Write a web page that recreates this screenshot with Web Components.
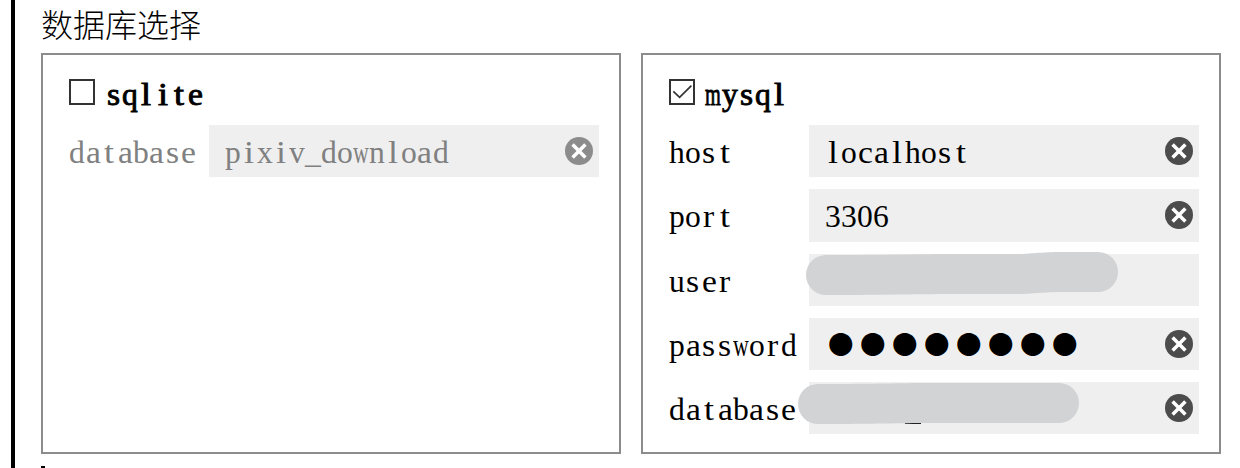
<!DOCTYPE html>
<html lang="zh-CN">
<head>
<meta charset="utf-8">
<title>数据库选择</title>
<style>
html, body { margin: 0; height: 100%; overflow: hidden; background: #fff; color: #000; }
body { font: 32px/40px "Liberation Serif", "Noto Sans CJK SC", serif; }
</style>
</head>
<body>
<db-page>
  <db-panel name="sqlite" disabled>
    <db-field label="database" value="pixiv_download" clearable></db-field>
  </db-panel>
  <db-panel name="mysql" checked>
    <db-field label="host" value="localhost" clearable></db-field>
    <db-field label="port" value="3306" clearable></db-field>
    <db-field label="user"><db-mask kind="user"></db-mask></db-field>
    <db-field label="password" secret="●●●●●●●●" clearable></db-field>
    <db-field label="database" clearable><db-mask kind="database"></db-mask></db-field>
  </db-panel>
</db-page>
<script>
// Text set on a fixed grid: each letter is centred in a half-width cell.
customElements.define('cell-text', class extends HTMLElement {
  connectedCallback() {
    if (this.shadowRoot) return;
    const cell = Number(this.getAttribute('cell')) || 16;
    this.attachShadow({ mode: 'open' }).innerHTML =
      `<style>:host{display:inline-block;white-space:nowrap;font-kerning:none;font-variant-ligatures:none}
      .fit{display:inline-block;transform-origin:0 0}</style><span class="line"></span>`;
    const line = this.shadowRoot.querySelector('.line');
    const letters = [...this.getAttribute('text')].map(ch => {
      const s = document.createElement('span');
      s.textContent = ch;
      line.append(s);
      return s;
    });
    const widths = letters.map(s => s.getBoundingClientRect().width);
    letters.forEach((s, i) => {
      const w = widths[i];
      const stretch = w > 15.8 ? 15.8 / w : w < 10 ? 1.12 : w < 15 ? 1.05 : 1;
      s.className = 'fit';
      s.style.transform = `scaleX(${stretch})`;
      const left = (cell - w * stretch) / 2;
      s.style.marginLeft = left + 'px';
      s.style.marginRight = cell - left - w + 'px';
    });
  }
});

customElements.define('clear-button', class extends HTMLElement {
  constructor() {
    super();
    this.attachShadow({ mode: 'open' }).innerHTML = `
      <style>:host{display:block;width:28px;height:28px;flex:none}svg{display:block}</style>
      <svg width="28" height="28" viewBox="0 0 28 28">
        <circle cx="14" cy="14" r="14" fill="var(--icon,#4c4c4c)"/>
        <path d="M7.6 7.6 20.4 20.4M20.4 7.6 7.6 20.4" stroke="#fff" stroke-width="3.5"/>
      </svg>`;
  }
});

customElements.define('check-box', class extends HTMLElement {
  connectedCallback() {
    if (this.shadowRoot) return;
    const tick = this.hasAttribute('checked')
      ? '<path d="M4.3 12.3 10.6 18.4 22.4 6.6" fill="none" stroke="#333" stroke-width="1.7"/>' : '';
    this.attachShadow({ mode: 'open' }).innerHTML = `
      <style>:host{display:block;width:26px;height:26px;flex:none}svg{display:block}</style>
      <svg width="26" height="26" viewBox="0 0 26 26">
        <rect x="1" y="1" width="24" height="24" fill="#fff" stroke="#333" stroke-width="2"/>${tick}
      </svg>`;
  }
});

// Marker stroke laid over a private value.
customElements.define('db-mask', class extends HTMLElement {
  connectedCallback() {
    if (this.shadowRoot) return;
    const shapes = {
      user: '<path d="M17 1C80 1 110 0 150 0H208C222 0 230-2 255-2H289A20 20 0 0 1 289 38H255C232 38 225 40 208 40H150C110 40 80 41 17 41A20 20 0 0 1 17 1Z"/>',
      database: '<path d="M96 40H112V42H96Z" fill="#222"/><path d="M9 2C70 2 90 1 120 1H250A20 20 0 0 1 250 41H120C90 41 70 42 9 42A20 20 0 0 1 9 2Z"/>'
    };
    this.attachShadow({ mode: 'open' }).innerHTML = `
      <style>:host{position:absolute;left:0;top:0}svg{display:block;overflow:visible}</style>
      <svg width="390" height="52" viewBox="0 0 390 52" fill="#d1d3d5">${shapes[this.getAttribute('kind')]}</svg>`;
  }
});

customElements.define('db-field', class extends HTMLElement {
  connectedCallback() {
    if (this.shadowRoot) return;
    const value = this.getAttribute('value');
    const secret = this.getAttribute('secret');
    this.attachShadow({ mode: 'open' }).innerHTML = `
      <style>
        :host{display:grid;grid-template-columns:140px 390px;height:52.25px}
        .label{padding-top:7px}
        .box{position:relative;display:flex;align-items:flex-start;background:#efefef;padding:0 6px 0 16px}
        .value{padding-top:7px}
        .secret{font:25.5px/40px "Noto Sans CJK SC",sans-serif;letter-spacing:6.5px;padding:5px 0 0 3px}
        clear-button{margin:12px 0 0 auto}
      </style>
      <div class="label"><cell-text text="${this.getAttribute('label')}"></cell-text></div>
      <div class="box">
        ${value ? `<cell-text class="value" text="${value}"></cell-text>` : ''}
        ${secret ? `<span class="secret">${secret}</span>` : ''}
        ${this.hasAttribute('clearable') ? '<clear-button></clear-button>' : ''}
        <slot></slot>
      </div>`;
  }
});

customElements.define('db-panel', class extends HTMLElement {
  connectedCallback() {
    if (this.shadowRoot) return;
    this.attachShadow({ mode: 'open' }).innerHTML = `
      <style>
        :host{display:block;box-sizing:border-box;width:580px;height:401px;border:2px solid #8c8c8c;padding:24px 20px 0 26px}
        :host([disabled]){--icon:#8c8c8c;color:#808080}
        header{display:flex;gap:10px;height:46px;color:#000;-webkit-text-stroke:0.9px #000}
        cell-text{margin-top:-5px}
        .rows{display:flex;flex-direction:column;gap:12px}
      </style>
      <header>
        <check-box ${this.hasAttribute('checked') ? 'checked' : ''}></check-box>
        <cell-text cell="16.5" text="${this.getAttribute('name')}"></cell-text>
      </header>
      <div class="rows"><slot></slot></div>`;
  }
});

customElements.define('db-page', class extends HTMLElement {
  constructor() {
    super();
    this.attachShadow({ mode: 'open' }).innerHTML = `
      <style>
        :host{display:block;box-sizing:border-box;height:468px;margin-left:11px;border-left:4px solid #000;padding-left:26px;overflow:hidden}
        h1{margin:0;height:53px;font:300 32px/47px "Noto Sans CJK SC",sans-serif}
        .panels{display:flex;gap:20px}
        .next{width:4px;height:2px;margin-top:12px;background:#000}
      </style>
      <h1>数据库选择</h1>
      <div class="panels"><slot></slot></div>
      <div class="next"></div>`;
  }
});
</script>
</body>
</html>
